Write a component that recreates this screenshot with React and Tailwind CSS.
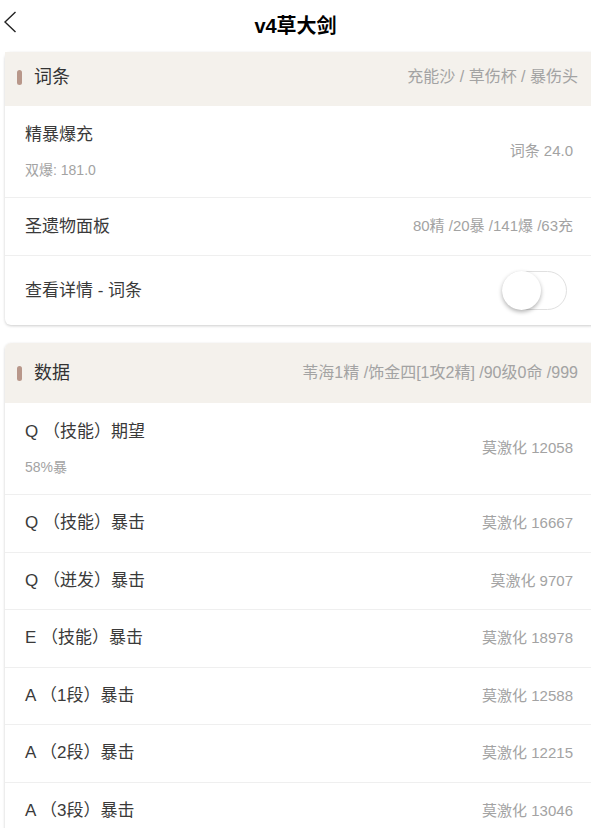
import React, { useState } from 'react';

const font = { fontFamily: '"Liberation Sans", "Noto Sans CJK SC", sans-serif' };

const statRows = [
  { title: 'Q （技能）暴击', value: '莫激化 16667' },
  { title: 'Q （迸发）暴击', value: '莫激化 9707' },
  { title: 'E （技能）暴击', value: '莫激化 18978' },
  { title: 'A （1段）暴击', value: '莫激化 12588' },
  { title: 'A （2段）暴击', value: '莫激化 12215' },
  { title: 'A （3段）暴击', value: '莫激化 13046' },
];

function CardHeader({ title, extra, className }) {
  return (
    <div className={`flex items-center justify-between bg-[#f4f1ec] pl-3 pr-[19px] ${className}`}>
      <div className="flex items-center gap-3">
        <span className="block w-[5px] h-[15px] rounded-full bg-[#b8978a]" />
        <span className="text-[18px] text-[#333]">{title}</span>
      </div>
      <span className="text-[16px] text-[#a3a3a3]">{extra}</span>
    </div>
  );
}

function Row({ title, sub, value, className = 'h-[57.5px]' }) {
  return (
    <div className={`flex items-center justify-between border-t border-[#efefef] pl-5 pr-6 ${className}`}>
      <div className="flex flex-col gap-[13px]">
        <span className="text-[17px] leading-6 text-[#3a3a3a]">{title}</span>
        {sub && <span className="text-[14px] leading-5 text-[#a3a3a3]">{sub}</span>}
      </div>
      <span className="text-[15px] text-[#a3a3a3]">{value}</span>
    </div>
  );
}

export default function App() {
  const [on, setOn] = useState(false);

  return (
    <div className="w-[591px] h-[828px] overflow-hidden bg-white" style={font}>
      <div className="relative flex h-[52px] items-center justify-center">
        <svg className="absolute left-[3px] top-[11px]" width="14" height="22" viewBox="0 0 14 22">
          <path d="M12.5 1 L2 11 L12.5 21" fill="none" stroke="#222" strokeWidth="1.4" />
        </svg>
        <h1 className="text-[20px] font-bold text-black">v4草大剑</h1>
      </div>

      <div className="ml-[5px] w-[592px] rounded-md bg-white shadow-[0_1px_3px_rgba(0,0,0,0.2)]">
        <CardHeader title="词条" extra="充能沙 / 草伤杯 / 暴伤头" className="h-[54px] pb-1" />
        <Row title="精暴爆充" sub="双爆: 181.0" value="词条 24.0" className="h-[91px] border-t-0" />
        <Row title="圣遗物面板" value="80精 /20暴 /141爆 /63充" className="h-[58px]" />
        <div className="flex h-[70px] items-center justify-between border-t border-[#efefef] pl-5 pr-[30px]">
          <span className="text-[17px] text-[#3a3a3a]">查看详情 - 词条</span>
          <button
            onClick={() => setOn(!on)}
            className={`relative h-[39px] w-[65px] rounded-full border border-[#e0e0e0] ${on ? 'bg-[#b8978a]' : 'bg-white'}`}
          >
            <span
              className={`absolute top-[-1px] h-[39px] w-[39px] rounded-full bg-white shadow-[0_2px_4px_rgba(0,0,0,0.3)] ${on ? 'left-[25px]' : 'left-[-1px]'}`}
            />
          </button>
        </div>
      </div>

      <div className="ml-[5px] mt-[18px] w-[592px] rounded-md bg-white shadow-[0_1px_3px_rgba(0,0,0,0.2)]">
        <CardHeader title="数据" extra="苇海1精 /饰金四[1攻2精] /90级0命 /999" className="h-[60px] rounded-t-md" />
        <Row title="Q （技能）期望" sub="58%暴" value="莫激化 12058" className="h-[91px] border-t-0" />
        {statRows.map((r) => (
          <Row key={r.title} title={r.title} value={r.value} />
        ))}
      </div>
    </div>
  );
}
